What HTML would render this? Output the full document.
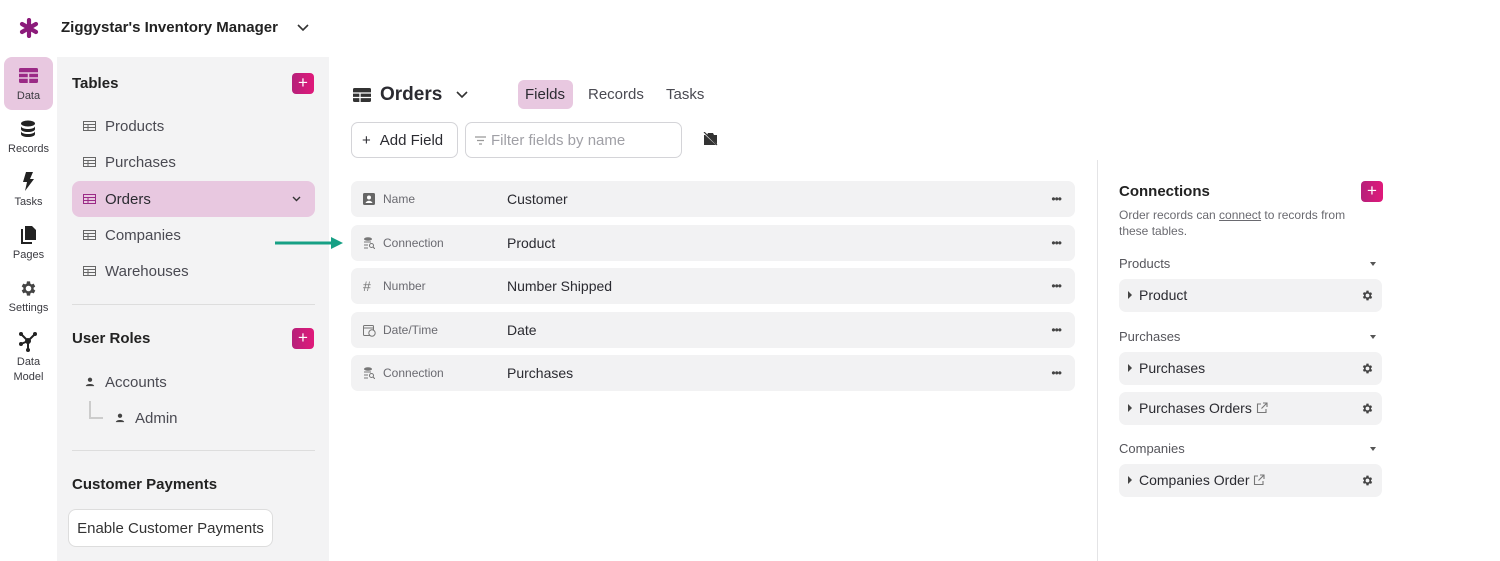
<!DOCTYPE html>
<html><head><meta charset="utf-8"><style>
*{box-sizing:border-box;margin:0;padding:0}
body{width:1500px;height:561px;overflow:hidden;background:#fff;font-family:"Liberation Sans",sans-serif;color:#2b2b31;position:relative}
.a{position:absolute}
.rail{left:0;top:57px;width:57px;text-align:center;font-size:11px;color:#3a3a40}
.ri{position:absolute;left:4px;width:49px;text-align:center}
.side{left:57px;top:57px;width:272px;height:504px;background:#f3f3f4}
.h{font-weight:bold;font-size:15px;color:#222}
.plus{width:22px;height:21px;border-radius:4px;background:linear-gradient(90deg,#b5207a,#e0197a);color:#fff;text-align:center;line-height:20px;font-size:17px}
.ti{position:absolute;left:15px;width:243px;height:36px;font-size:15px;color:#4a4a52;line-height:38px;padding-left:33px;border-radius:8px}
.ti svg{position:absolute;left:11px;top:13px}
.row{position:absolute;left:351px;width:724px;height:36px;background:#f2f2f3;border-radius:7px;font-size:14px;line-height:36px}
.row .t{position:absolute;left:32px;font-size:12px;color:#6a6a70}
.row .n{position:absolute;left:156px;color:#2b2b31}
.row .d{position:absolute;right:14px;top:0;font-size:12px;color:#444;letter-spacing:-1px}
.row svg{position:absolute;left:12px;top:12px}
.cr{position:absolute;left:1119px;width:263px;height:33px;background:#f2f2f3;border-radius:7px;font-size:14px;line-height:33px;padding-left:20px;color:#2b2b31}
.cr:before{content:"";position:absolute;left:9px;top:12px;border-left:4px solid #444;border-top:4px solid transparent;border-bottom:4px solid transparent}
.cr .g{position:absolute;right:8px;top:10px}
.ch{position:absolute;left:1119px;font-size:13px;color:#55555b}
.ch:after{content:"";position:absolute;left:251px;top:6px;border-top:4px solid #555;border-left:3.5px solid transparent;border-right:3.5px solid transparent}
</style></head><body>
<svg width="0" height="0" style="position:absolute"><defs>
<symbol id="gear" viewBox="0 0 24 24"><path fill="#444" d="M19.4 13a7.5 7.5 0 000-2l2.1-1.6-2-3.5-2.5 1a7 7 0 00-1.7-1L15 3h-4l-.4 2.8a7 7 0 00-1.7 1l-2.5-1-2 3.5L6.6 11a7.5 7.5 0 000 2l-2.2 1.6 2 3.5 2.5-1a7 7 0 001.7 1L11 21h4l.4-2.8a7 7 0 001.7-1l2.5 1 2-3.5zM13 15.5a3.5 3.5 0 110-7 3.5 3.5 0 010 7z" transform="translate(-1 0)"/></symbol>
<symbol id="person" viewBox="0 0 12 12"><circle cx="6" cy="3.3" r="2.6" fill="#444"/><path d="M1 11c0-3.5 10-3.5 10 0z" fill="#444"/></symbol>
<symbol id="ext" viewBox="0 0 12 12"><path d="M5 2H1.5v8.5H10V7M7 1h4v4M11 1L5.5 6.5" stroke="#777" fill="none" stroke-width="1.1"/></symbol>
</defs></svg>
<svg class="a" style="left:19px;top:18px" width="20" height="20" viewBox="0 0 20 20"><g stroke="#8b1a7a" stroke-width="4.2" stroke-linecap="round"><path d="M10 2v16M3 6l14 8M3 14l14-8"/></g></svg>
<div class="a" style="left:61px;top:19px;font-size:15px;font-weight:bold;color:#222">Ziggystar's Inventory Manager</div>
<svg class="a" style="left:297px;top:24px" width="12" height="8"><path d="M1 1l5 5 5-5" stroke="#333" stroke-width="1.6" fill="none"/></svg>

<div class="a rail" style="height:504px">
<div class="ri" style="top:0;height:53px;background:#e8c8e0;border-radius:8px"></div>
<svg class="a" style="left:18px;top:10px" width="21" height="17"><rect x="1" y="1" width="19" height="15" rx="1.5" fill="#9b2a86"/><path d="M1 6h19M1 11h19M10.5 6v10" stroke="#e8c8e0" stroke-width="1.5"/></svg>
<div class="ri" style="top:33px">Data</div>
<svg class="a" style="left:20px;top:63px" width="16" height="18"><ellipse cx="8" cy="3.5" rx="7" ry="3" fill="#222"/><path d="M1 6c0 4 14 4 14 0v3c0 4-14 4-14 0zM1 11c0 4 14 4 14 0v3c0 4-14 4-14 0z" fill="#222"/></svg>
<div class="ri" style="top:86px">Records</div>
<svg class="a" style="left:22px;top:115px" width="12" height="19"><path d="M4 0h7L8 7h4L3 19l2-9H1z" fill="#222"/></svg>
<div class="ri" style="top:139px">Tasks</div>
<svg class="a" style="left:20px;top:168px" width="17" height="19"><path d="M5 1h7l4 4v10H5z" fill="#222"/><path d="M2 4v14h10" stroke="#222" stroke-width="2" fill="none"/></svg>
<div class="ri" style="top:192px">Pages</div>
<svg class="a" style="left:19px;top:222px" width="19" height="19"><use href="#gear" fill="#222"/></svg>
<div class="ri" style="top:245px">Settings</div>
<svg class="a" style="left:18px;top:274px" width="20" height="22"><path d="M3 3l7 7 7-7M10 10l-7 3M10 10v9" stroke="#222" stroke-width="2" fill="none"/><circle cx="10" cy="10" r="3" fill="#222"/><circle cx="3" cy="3" r="2" fill="#222"/><circle cx="17" cy="3" r="2" fill="#222"/><circle cx="3" cy="13" r="2" fill="#222"/><circle cx="10" cy="19" r="2" fill="#222"/></svg>
<div class="ri" style="top:298px;line-height:15px">Data<br>Model</div>
</div>

<div class="a side">
<div class="a h" style="left:15px;top:18px">Tables</div>
<div class="a plus" style="left:235px;top:16px">+</div>
<div class="ti" style="top:51px"><svg width="13" height="10"><rect x=".5" y=".5" width="12" height="9" fill="none" stroke="#666"/><path d="M0 3.5h13M0 6.5h13M5 3.5v6" stroke="#666"/></svg>Products</div>
<div class="ti" style="top:87px"><svg width="13" height="10"><rect x=".5" y=".5" width="12" height="9" fill="none" stroke="#666"/><path d="M0 3.5h13M0 6.5h13M5 3.5v6" stroke="#666"/></svg>Purchases</div>
<div class="ti" style="top:124px;background:#e8c8e0;color:#2b2b31"><svg width="13" height="10"><rect x=".5" y=".5" width="12" height="9" fill="none" stroke="#9b2a86"/><path d="M0 3.5h13M0 6.5h13M5 3.5v6" stroke="#9b2a86"/></svg>Orders<svg style="left:220px;top:15px" width="9" height="6"><path d="M1 1l3.5 3.5L8 1" stroke="#333" stroke-width="1.4" fill="none"/></svg></div>
<div class="ti" style="top:160px"><svg width="13" height="10"><rect x=".5" y=".5" width="12" height="9" fill="none" stroke="#666"/><path d="M0 3.5h13M0 6.5h13M5 3.5v6" stroke="#666"/></svg>Companies</div>
<div class="ti" style="top:196px"><svg width="13" height="10"><rect x=".5" y=".5" width="12" height="9" fill="none" stroke="#666"/><path d="M0 3.5h13M0 6.5h13M5 3.5v6" stroke="#666"/></svg>Warehouses</div>
<div class="a" style="left:15px;top:247px;width:243px;height:1px;background:#ddd"></div>
<div class="a h" style="left:15px;top:273px">User Roles</div>
<div class="a plus" style="left:235px;top:271px">+</div>
<svg class="a" style="left:28px;top:320px" width="10" height="10"><use href="#person"/></svg>
<div class="a" style="left:48px;top:317px;font-size:15px;color:#4a4a52">Accounts</div>
<div class="a" style="left:32px;top:344px;width:14px;height:18px;border-left:2px solid #ccc;border-bottom:2px solid #ccc"></div>
<svg class="a" style="left:58px;top:356px" width="10" height="10"><use href="#person"/></svg>
<div class="a" style="left:78px;top:353px;font-size:15px;color:#4a4a52">Admin</div>
<div class="a" style="left:15px;top:393px;width:243px;height:1px;background:#ddd"></div>
<div class="a h" style="left:15px;top:419px">Customer Payments</div>
<div class="a" style="left:11px;top:452px;width:205px;height:38px;background:#fff;border:1px solid #ddd;border-radius:8px;font-size:15px;line-height:38px;text-align:center;color:#333">Enable Customer Payments</div>
</div>

<svg class="a" style="left:273px;top:235px" width="72" height="16"><path d="M2 8h60" stroke="#17a085" stroke-width="3"/><path d="M58 2l12 6-12 6z" fill="#17a085"/></svg>

<svg class="a" style="left:352px;top:87px" width="20" height="16"><rect x="1" y="1" width="18" height="14" rx="1.5" fill="#333"/><path d="M1 6h18M1 10.5h18M8 6v9" stroke="#fff" stroke-width="1.3"/></svg>
<div class="a" style="left:380px;top:84px;font-size:19px;font-weight:bold;color:#2b2b31">Orders</div>
<svg class="a" style="left:456px;top:91px" width="12" height="8"><path d="M1 1l5 5 5-5" stroke="#333" stroke-width="1.6" fill="none"/></svg>
<div class="a" style="left:518px;top:80px;width:55px;height:29px;background:#e8c8e0;border-radius:6px"></div>
<div class="a" style="left:525px;top:86px;font-size:15px;color:#2b2b31">Fields</div>
<div class="a" style="left:588px;top:86px;font-size:15px;color:#4a4a52">Records</div>
<div class="a" style="left:666px;top:86px;font-size:15px;color:#4a4a52">Tasks</div>
<div class="a" style="left:351px;top:122px;width:107px;height:36px;border:1px solid #d4d4d8;border-radius:7px;font-size:15px;line-height:35px;padding-left:10px;color:#2b2b31"><span style="margin-right:9px">+</span>Add Field</div>
<div class="a" style="left:465px;top:122px;width:217px;height:36px;border:1px solid #d4d4d8;border-radius:7px;font-size:15px;line-height:35px;padding-left:25px;color:#a0a0a6">Filter fields by name<svg class="a" style="left:9px;top:13px" width="11" height="9"><path d="M0 1h11M2 4.5h7M4 8h3" stroke="#999" stroke-width="1.2"/></svg></div>
<svg class="a" style="left:703px;top:132px" width="15" height="14"><path d="M1 3h3l1-2h5l1 2h3v10H1z" fill="#333"/><path d="M1 1l13 12" stroke="#fff" stroke-width="1.4"/><path d="M1 0l13 13" stroke="#333" stroke-width="1.2"/></svg>

<div class="row" style="top:181px"><svg width="12" height="12"><rect width="12" height="12" rx="1.5" fill="#666"/><circle cx="6" cy="4.5" r="2" fill="#fff"/><path d="M2.5 10c1-3 6-3 7 0z" fill="#fff"/></svg><span class="t">Name</span><span class="n">Customer</span><span class="d">•••</span></div>
<div class="row" style="top:225px"><svg width="12" height="12"><ellipse cx="5" cy="2" rx="4" ry="1.8" fill="#777"/><path d="M1 5h7M1 8h4M1 11h4" stroke="#777"/><circle cx="8.5" cy="8.5" r="2" stroke="#777" fill="none"/><path d="M10 10l2 2" stroke="#777"/></svg><span class="t">Connection</span><span class="n">Product</span><span class="d">•••</span></div>
<div class="row" style="top:268px"><span class="t" style="left:12px;font-size:14px;color:#777">#</span><span class="t">Number</span><span class="n">Number Shipped</span><span class="d">•••</span></div>
<div class="row" style="top:312px"><svg width="13" height="13"><rect x=".5" y="1.5" width="10" height="10" rx="1" fill="none" stroke="#777"/><path d="M0 4h11" stroke="#777"/><circle cx="9" cy="9" r="3.2" fill="#f2f2f3" stroke="#777"/></svg><span class="t">Date/Time</span><span class="n">Date</span><span class="d">•••</span></div>
<div class="row" style="top:355px"><svg width="12" height="12"><ellipse cx="5" cy="2" rx="4" ry="1.8" fill="#777"/><path d="M1 5h7M1 8h4M1 11h4" stroke="#777"/><circle cx="8.5" cy="8.5" r="2" stroke="#777" fill="none"/><path d="M10 10l2 2" stroke="#777"/></svg><span class="t">Connection</span><span class="n">Purchases</span><span class="d">•••</span></div>

<div class="a" style="left:1097px;top:160px;width:1px;height:401px;background:#e4e4e6"></div>
<div class="a" style="left:1119px;top:183px;font-size:15px;font-weight:bold;color:#222">Connections</div>
<div class="a plus" style="left:1361px;top:181px">+</div>
<div class="a" style="left:1119px;top:207px;font-size:12px;line-height:16px;color:#6a6a70;width:245px">Order records can <u>connect</u> to records from these tables.</div>
<div class="ch" style="top:256px">Products</div>
<div class="cr" style="top:279px">Product<svg class="g" width="13" height="13"><use href="#gear"/></svg></div>
<div class="ch" style="top:329px">Purchases</div>
<div class="cr" style="top:352px">Purchases<svg class="g" width="13" height="13"><use href="#gear"/></svg></div>
<div class="cr" style="top:392px">Purchases Orders <svg width="12" height="12" style="vertical-align:-1px"><use href="#ext"/></svg><svg class="g" width="13" height="13"><use href="#gear"/></svg></div>
<div class="ch" style="top:441px">Companies</div>
<div class="cr" style="top:464px">Companies Order <svg width="12" height="12" style="vertical-align:-1px"><use href="#ext"/></svg><svg class="g" width="13" height="13"><use href="#gear"/></svg></div>
</body></html>
